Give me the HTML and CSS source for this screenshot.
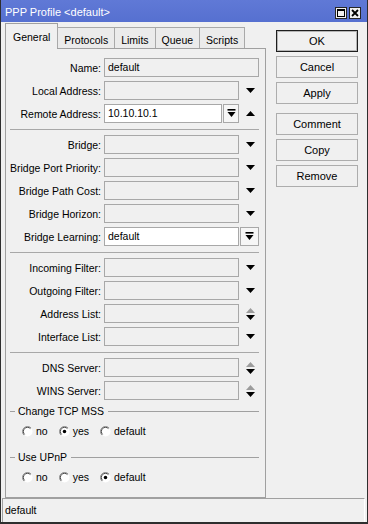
FILE: index.html
```html
<!DOCTYPE html>
<html lang="en">
<head>
  <meta charset="UTF-8">
  <title>PPP Profile &lt;default&gt;</title>
  <link rel="stylesheet" href="styles.css">
</head>
<body>
  <!-- shared glyphs -->
  <svg class="sprite" xmlns="http://www.w3.org/2000/svg">
    <symbol id="dn" viewBox="0 0 9 5"><polygon points="0,0 9,0 4.5,5" fill="#000"/></symbol>
    <symbol id="up" viewBox="0 0 9 5"><polygon points="0,5 9,5 4.5,0" fill="#000"/></symbol>
    <symbol id="updn" viewBox="0 0 9 12">
      <polygon points="0,5 9,5 4.5,0" fill="#9c9c9c"/>
      <polygon points="0,7 9,7 4.5,12" fill="#000"/>
    </symbol>
    <symbol id="pick" viewBox="0 0 9 9">
      <rect x="0.5" y="0" width="8" height="1.6" fill="#000"/>
      <polygon points="0.5,3 8.5,3 4.5,8" fill="#000"/>
    </symbol>
    <symbol id="rd" viewBox="0 0 12 12">
      <circle cx="6" cy="6" r="5.5" fill="#fff"/>
      <path d="M2.1 9.9 A5.5 5.5 0 0 1 9.9 2.1" stroke="#8a8a8a" fill="none"/>
      <path d="M2.8 9.2 A4.5 4.5 0 0 1 9.2 2.8" stroke="#3a3a3a" fill="none"/>
    </symbol>
    <symbol id="rd-on" viewBox="0 0 12 12">
      <circle cx="6" cy="6" r="5.5" fill="#fff"/>
      <path d="M2.1 9.9 A5.5 5.5 0 0 1 9.9 2.1" stroke="#8a8a8a" fill="none"/>
      <path d="M2.8 9.2 A4.5 4.5 0 0 1 9.2 2.8" stroke="#3a3a3a" fill="none"/>
      <circle cx="6" cy="6" r="1.9" fill="#000"/>
    </symbol>
  </svg>

  <div class="window">
    <div class="titlebar">
      <span class="title">PPP Profile &lt;default&gt;</span>
      <div class="title-btns">
        <span class="tbtn">
          <svg width="8" height="8" viewBox="0 0 8 8"><rect x="0.5" y="0.5" width="7" height="7" fill="none" stroke="#000"/><rect x="0" y="0" width="8" height="2" fill="#000"/></svg>
        </span>
        <span class="tbtn">
          <svg width="8" height="8" viewBox="0 0 8 8"><path d="M1 1 L7 7 M7 1 L1 7" stroke="#000" stroke-width="1.8"/></svg>
        </span>
      </div>
    </div>

    <div class="main">
      <div class="left">
        <div class="tabs">
          <div class="tab active">General</div>
          <div class="tab">Protocols</div>
          <div class="tab">Limits</div>
          <div class="tab">Queue</div>
          <div class="tab">Scripts</div>
        </div>

        <div class="panel">
          <div class="row">
            <span class="lbl">Name:</span>
            <div class="field wide">default</div>
          </div>
          <div class="row">
            <span class="lbl">Local Address:</span>
            <div class="field"></div>
            <span class="drop"><svg class="tri"><use href="#dn"/></svg></span>
          </div>
          <div class="row">
            <span class="lbl">Remote Address:</span>
            <div class="field short white">10.10.10.1</div>
            <span class="fbtn"><svg class="pk"><use href="#pick"/></svg></span>
            <span class="drop"><svg class="tri"><use href="#up"/></svg></span>
          </div>

          <div class="sep"></div>

          <div class="row">
            <span class="lbl">Bridge:</span>
            <div class="field"></div>
            <span class="drop"><svg class="tri"><use href="#dn"/></svg></span>
          </div>
          <div class="row">
            <span class="lbl">Bridge Port Priority:</span>
            <div class="field"></div>
            <span class="drop"><svg class="tri"><use href="#dn"/></svg></span>
          </div>
          <div class="row">
            <span class="lbl">Bridge Path Cost:</span>
            <div class="field"></div>
            <span class="drop"><svg class="tri"><use href="#dn"/></svg></span>
          </div>
          <div class="row">
            <span class="lbl">Bridge Horizon:</span>
            <div class="field"></div>
            <span class="drop"><svg class="tri"><use href="#dn"/></svg></span>
          </div>
          <div class="row">
            <span class="lbl">Bridge Learning:</span>
            <div class="field white">default</div>
            <span class="fbtn big"><svg class="pk"><use href="#pick"/></svg></span>
          </div>

          <div class="sep"></div>

          <div class="row">
            <span class="lbl">Incoming Filter:</span>
            <div class="field"></div>
            <span class="drop"><svg class="tri"><use href="#dn"/></svg></span>
          </div>
          <div class="row">
            <span class="lbl">Outgoing Filter:</span>
            <div class="field"></div>
            <span class="drop"><svg class="tri"><use href="#dn"/></svg></span>
          </div>
          <div class="row">
            <span class="lbl">Address List:</span>
            <div class="field"></div>
            <span class="drop"><svg class="ud"><use href="#updn"/></svg></span>
          </div>
          <div class="row">
            <span class="lbl">Interface List:</span>
            <div class="field"></div>
            <span class="drop"><svg class="tri"><use href="#dn"/></svg></span>
          </div>

          <div class="sep"></div>

          <div class="row">
            <span class="lbl">DNS Server:</span>
            <div class="field"></div>
            <span class="drop"><svg class="ud"><use href="#updn"/></svg></span>
          </div>
          <div class="row">
            <span class="lbl">WINS Server:</span>
            <div class="field"></div>
            <span class="drop"><svg class="ud"><use href="#updn"/></svg></span>
          </div>

          <div class="group">Change TCP MSS</div>
          <div class="radios">
            <span class="radio"><svg><use href="#rd"/></svg>no</span>
            <span class="radio"><svg><use href="#rd-on"/></svg>yes</span>
            <span class="radio"><svg><use href="#rd"/></svg>default</span>
          </div>

          <div class="group second">Use UPnP</div>
          <div class="radios">
            <span class="radio"><svg><use href="#rd"/></svg>no</span>
            <span class="radio"><svg><use href="#rd"/></svg>yes</span>
            <span class="radio"><svg><use href="#rd-on"/></svg>default</span>
          </div>
        </div>
      </div>

      <div class="buttons">
        <button class="btn default">OK</button>
        <button class="btn">Cancel</button>
        <button class="btn">Apply</button>
        <button class="btn spaced">Comment</button>
        <button class="btn">Copy</button>
        <button class="btn">Remove</button>
      </div>
    </div>

    <div class="status">
      <div class="status-field">default</div>
    </div>
  </div>
</body>
</html>
```

FILE: styles.css
```css
* { margin: 0; padding: 0; box-sizing: border-box; }
body {
  font-family: "Liberation Sans", Arial, sans-serif;
  font-size: 10.5px;
  color: #000;
  background: #f0f0f0;
}
.sprite { display: block; width: 0; height: 0; overflow: hidden; }

.window {
  width: 368px;
  height: 524px;
  display: flex;
  flex-direction: column;
  background: #f0f0f0;
  border: 1px solid #2e2e2e;
  border-top: none;
  border-bottom-width: 2px;
}

/* title bar */
.titlebar {
  height: 22px;
  flex: none;
  display: flex;
  align-items: center;
  justify-content: space-between;
  padding: 2px 6px 0 4px;
  background: linear-gradient(180deg, #6079d6, #5670d0);
  color: #fff;
  font-size: 11px;
}
.title-btns { display: flex; gap: 2px; margin-top: 1px; }
.tbtn {
  width: 12px;
  height: 12px;
  background: #f0f0f0;
  border: 1px solid #262626;
  display: flex;
  align-items: center;
  justify-content: center;
}

/* body */
.main {
  flex: 1;
  display: flex;
  padding: 1px 0 0 4px;
}
.left {
  width: 261px;
  display: flex;
  flex-direction: column;
}

.tabs {
  height: 25px;
  display: flex;
  align-items: flex-end;
  position: relative;
  z-index: 1;
}
.tab {
  height: 21px;
  padding: 3px 6px 0;
  margin-left: -1px;
  border: 1px solid #a9a9a9;
  border-bottom: none;
  background: #ebebeb;
  display: flex;
  align-items: center;
}
.tab.active {
  height: 26px;
  margin: 0 0 -1px 0;
  padding: 0 7px 0 7px;
  background: #f0f0f0;
  border-color: #a0a0a0;
}

.panel {
  height: 450px;
  border: 1px solid #a0a0a0;
  padding-top: 9px;
  display: flex;
  flex-direction: column;
  gap: 4px;
}

.row {
  height: 19px;
  display: flex;
  align-items: center;
}
.lbl {
  width: 95px;
  margin-right: 3px;
  text-align: right;
  white-space: nowrap;
}
.field {
  width: 135px;
  height: 19px;
  padding: 0 3px;
  line-height: 17px;
  border: 1px solid #a8a8a8;
  background: #f0f0f0;
}
.field.wide { width: 155px; }
.field.short { width: 118px; }
.field.white { background: #fff; }

.drop {
  width: 22px;
  display: flex;
  justify-content: center;
}
.tri { width: 9px; height: 5px; }
.ud { width: 9px; height: 12px; }

.fbtn {
  width: 16px;
  height: 19px;
  margin-left: 1px;
  border: 1px solid #a8a8a8;
  background: #f6f6f6;
  display: flex;
  align-items: center;
  justify-content: center;
}
.fbtn.big { width: 19px; }
.pk { width: 9px; height: 9px; }

.sep {
  height: 1px;
  margin: 2px 6px 1px 4px;
  background: #a8a8a8;
}

/* grouped radio sets */
.group {
  height: 14px;
  margin: 0 6px 0 4px;
  display: flex;
  align-items: center;
  white-space: nowrap;
}
.group::before {
  content: "";
  width: 5px;
  height: 1px;
  margin-right: 3px;
  background: #a0a0a0;
}
.group::after {
  content: "";
  flex: 1;
  height: 1px;
  margin-left: 4px;
  background: #a0a0a0;
}
.group.second { margin-top: 6px; }

.radios {
  height: 18px;
  padding-left: 16px;
  display: flex;
  align-items: center;
}
.radio {
  display: flex;
  align-items: center;
  gap: 3px;
  margin-right: 11px;
}
.radio svg { width: 11px; height: 11px; }

/* right-hand buttons */
.buttons {
  width: 82px;
  margin: 7px 0 0 10px;
  display: flex;
  flex-direction: column;
  gap: 4px;
}
.btn {
  height: 22px;
  border: 1px solid #adadad;
  background: #f0f0f0;
  font: inherit;
  font-size: 11px;
  color: #000;
}
.btn.default {
  border-color: #1e1e1e;
  box-shadow: inset 0 0 0 1px #b5b5b5;
}
.btn.spaced { margin-top: 5px; }

/* status line */
.status {
  height: 24px;
  flex: none;
  padding: 0 2px 0 1px;
}
.status-field {
  height: 100%;
  padding-left: 2px;
  line-height: 22px;
  border-top: 1px solid #a0a0a0;
  border-left: 1px solid #a0a0a0;
  border-right: 1px solid #fff;
}
```
